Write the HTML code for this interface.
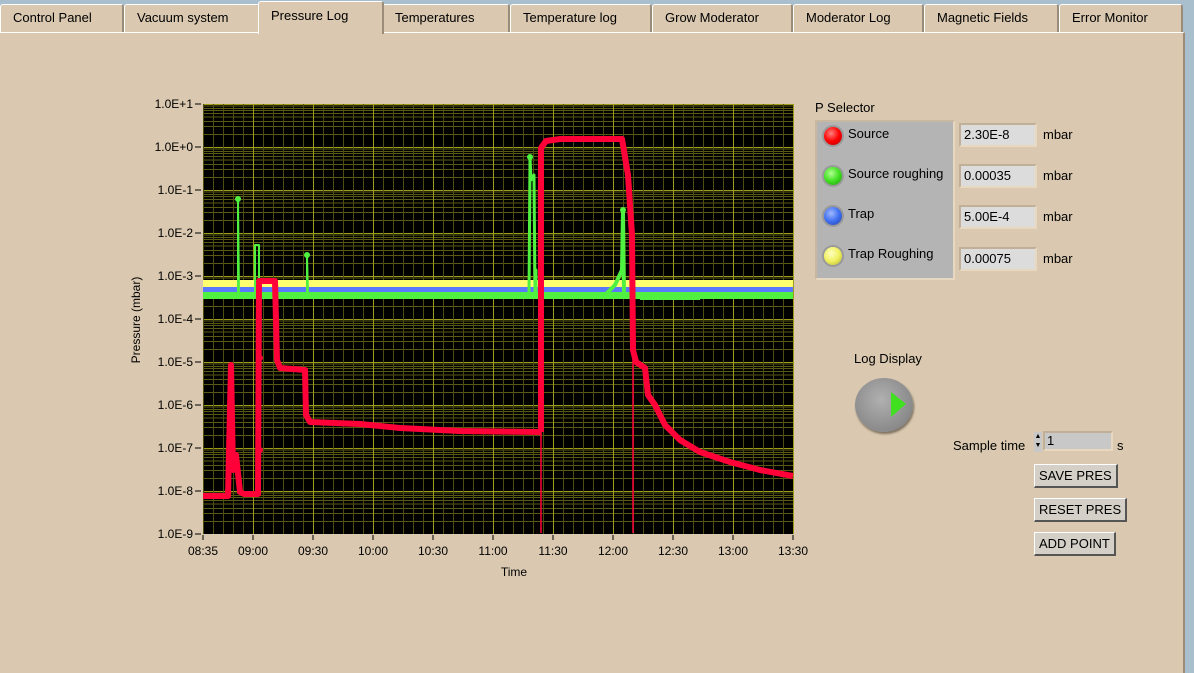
<!DOCTYPE html>
<html><head><meta charset="utf-8"><style>
body{margin:0;width:1194px;height:672px;overflow:hidden;background:#a9bfcd;font-family:"Liberation Sans",sans-serif;font-size:13px;color:#000}
.panel{position:absolute;left:0;top:32px;width:1183px;height:640px;background:#dac9b0;border-top:1px solid #fff;border-right:2px solid #9a8c78}
.tab{position:absolute;top:4px;height:28px;background:#dac9b0;border:1px solid #fff;border-right:2px solid #9a8c78;border-bottom:none;border-radius:3px 3px 0 0;box-sizing:border-box;padding:5px 0 0 12px;font-size:13px}
.tab.a{top:1px;height:33px;padding-top:6px;z-index:2}
.lbl{position:absolute;font-size:13px}
.box{position:absolute;background:#dcdcdc;border:2px solid #e8d8c0;border-top-color:#c0b098;border-left-color:#c0b098;height:18px;box-sizing:content-box;padding:1px 3px;font-size:13px;line-height:18px}
.btn{position:absolute;background:#d4d0c8;border:1px solid #fff;border-right:2px solid #555;border-bottom:2px solid #555;font-size:13px;padding:3px 4px;line-height:15px}
.led{position:absolute;width:18px;height:18px;border-radius:50%;box-shadow:0 0 0 2px #999}
</style></head><body>
<div class="tab" style="left:0;width:124px">Control Panel</div>
<div class="tab" style="left:124px;width:136px">Vacuum system</div>
<div class="tab a" style="left:258px;width:126px">Pressure Log</div>
<div class="tab" style="left:382px;width:128px">Temperatures</div>
<div class="tab" style="left:510px;width:142px">Temperature log</div>
<div class="tab" style="left:652px;width:141px">Grow Moderator</div>
<div class="tab" style="left:793px;width:131px">Moderator Log</div>
<div class="tab" style="left:924px;width:135px">Magnetic Fields</div>
<div class="tab" style="left:1059px;width:124px">Error Monitor</div>
<div class="panel"></div>

<svg style="position:absolute;left:0;top:0" width="1194" height="672" font-family="Liberation Sans,sans-serif" font-size="12">
<defs>
<pattern id="vmin" patternUnits="userSpaceOnUse" x="203" y="0" width="10" height="10"><line x1="0.5" y1="0" x2="0.5" y2="10" stroke="#4e4e10"/></pattern>
<pattern id="vmaj" patternUnits="userSpaceOnUse" x="253" y="0" width="60" height="10"><line x1="0.5" y1="0" x2="0.5" y2="10" stroke="#9c9c18"/></pattern>
<pattern id="hlog" patternUnits="userSpaceOnUse" x="0" y="104" width="10" height="43">
<g stroke="#5a5a12"><line x1="0" y1="30.5" x2="10" y2="30.5"/><line x1="0" y1="22.5" x2="10" y2="22.5"/><line x1="0" y1="17.5" x2="10" y2="17.5"/><line x1="0" y1="13" x2="10" y2="13"/><line x1="0" y1="9.5" x2="10" y2="9.5"/><line x1="0" y1="6.5" x2="10" y2="6.5"/><line x1="0" y1="4.5" x2="10" y2="4.5"/><line x1="0" y1="2" x2="10" y2="2"/></g>
<line x1="0" y1="0.5" x2="10" y2="0.5" stroke="#9c9c18"/></pattern>
</defs>
<rect x="203" y="104" width="590" height="430" fill="#000"/>
<rect x="203" y="104" width="590" height="430" fill="url(#hlog)"/>
<rect x="203" y="104" width="590" height="430" fill="url(#vmin)"/>
<rect x="203" y="104" width="591" height="430" fill="url(#vmaj)"/>
<g text-anchor="end">
<text x="193" y="108">1.0E+1</text><text x="193" y="151">1.0E+0</text><text x="193" y="194">1.0E-1</text><text x="193" y="237">1.0E-2</text><text x="193" y="280">1.0E-3</text><text x="193" y="323">1.0E-4</text><text x="193" y="366">1.0E-5</text><text x="193" y="409">1.0E-6</text><text x="193" y="452">1.0E-7</text><text x="193" y="495">1.0E-8</text><text x="193" y="538">1.0E-9</text>
</g>
<g stroke="#000">
<line x1="195" y1="104" x2="201" y2="104"/><line x1="195" y1="147" x2="201" y2="147"/><line x1="195" y1="190" x2="201" y2="190"/><line x1="195" y1="233" x2="201" y2="233"/><line x1="195" y1="276" x2="201" y2="276"/><line x1="195" y1="319" x2="201" y2="319"/><line x1="195" y1="362" x2="201" y2="362"/><line x1="195" y1="405" x2="201" y2="405"/><line x1="195" y1="448" x2="201" y2="448"/><line x1="195" y1="491" x2="201" y2="491"/><line x1="195" y1="534" x2="201" y2="534"/>
<line x1="203" y1="535" x2="203" y2="540"/><line x1="253" y1="535" x2="253" y2="540"/><line x1="313" y1="535" x2="313" y2="540"/><line x1="373" y1="535" x2="373" y2="540"/><line x1="433" y1="535" x2="433" y2="540"/><line x1="493" y1="535" x2="493" y2="540"/><line x1="553" y1="535" x2="553" y2="540"/><line x1="613" y1="535" x2="613" y2="540"/><line x1="673" y1="535" x2="673" y2="540"/><line x1="733" y1="535" x2="733" y2="540"/><line x1="793" y1="535" x2="793" y2="540"/>
</g>
<g text-anchor="middle">
<text x="203" y="555">08:35</text><text x="253" y="555">09:00</text><text x="313" y="555">09:30</text><text x="373" y="555">10:00</text><text x="433" y="555">10:30</text><text x="493" y="555">11:00</text><text x="553" y="555">11:30</text><text x="613" y="555">12:00</text><text x="673" y="555">12:30</text><text x="733" y="555">13:00</text><text x="793" y="555">13:30</text>
</g>
<rect x="203" y="280" width="590" height="7" fill="#ffff70"/><rect x="203" y="287" width="590" height="5" fill="#5a78ff"/><rect x="203" y="292" width="590" height="7" fill="#50f040"/>
<g fill="none" stroke-linejoin="round">
<polyline points="238,295 238,199 239,295" stroke="#50f040" stroke-width="2"/>
<polyline points="255,295 255,245 259,245 259,295" stroke="#50f040" stroke-width="2"/>
<polyline points="307,295 307,255 308,295" stroke="#50f040" stroke-width="2"/>
<polyline points="529,295 530,157 531,180 534,175 535,295 536,270 536,295" stroke="#50f040" stroke-width="3"/>
<polyline points="605,295 615,285 622,270 623,210 624,295 632,295" stroke="#50f040" stroke-width="4"/>
<polyline points="640,298 700,298" stroke="#50f040" stroke-width="4"/>
<polyline points="203,496 228,496 231,365 233,470 236,455 240,492 244,494 258,494 259,281 275,281 277,360 280,368 305,370 306,415 310,422 360,424 400,428 460,431 541,432" stroke="#ff0038" stroke-width="6"/>
<polyline points="541,432 541,148 546,141 560,139 622,139 628,175 632,235 633,350 636,362 645,368 648,395 655,405 665,425 680,440 700,452 730,462 760,470 793,476" stroke="#ff0038" stroke-width="6"/>
<polyline points="260,296 260,470" stroke="#ff0038" stroke-width="1.5"/>
<polyline points="541,160 541,533" stroke="#ff0038" stroke-width="1.5"/>
<polyline points="633,280 633,533" stroke="#ff0038" stroke-width="1.5"/>
</g>
<g fill="#ff0038"><circle cx="541" cy="245" r="3"/><circle cx="541" cy="358" r="3"/><circle cx="260" cy="358" r="3"/><circle cx="260" cy="450" r="3"/></g>
<g fill="#50f040"><circle cx="238" cy="199" r="3"/><circle cx="307" cy="255" r="3"/><circle cx="530" cy="157" r="3"/><circle cx="623" cy="210" r="3"/></g>
<text x="514" y="576" text-anchor="middle">Time</text>
<text transform="translate(140,320) rotate(-90)" text-anchor="middle">Pressure (mbar)</text>
</svg>

<div class="lbl" style="left:815px;top:100px">P Selector</div>
<div style="position:absolute;left:815px;top:120px;width:136px;height:156px;background:#b4b4b4;border:2px solid #e8d8c0;border-top-color:#c8b8a0;border-left-color:#c8b8a0"></div>
<div class="led" style="left:824px;top:127px;background:radial-gradient(circle at 40% 35%,#ff8080,#f00 50%,#a00)"></div>
<div class="led" style="left:824px;top:167px;background:radial-gradient(circle at 40% 35%,#b0ff90,#40e020 50%,#209010)"></div>
<div class="led" style="left:824px;top:207px;background:radial-gradient(circle at 40% 35%,#a0b8ff,#4070f0 50%,#2040a0)"></div>
<div class="led" style="left:824px;top:247px;background:radial-gradient(circle at 40% 35%,#ffffc0,#f0f060 50%,#b0b030)"></div>
<div class="lbl" style="left:848px;top:126px">Source</div>
<div class="lbl" style="left:848px;top:166px">Source roughing</div>
<div class="lbl" style="left:848px;top:206px">Trap</div>
<div class="lbl" style="left:848px;top:246px">Trap Roughing</div>
<div class="box" style="left:959px;top:123px;width:68px">2.30E-8</div>
<div class="box" style="left:959px;top:164px;width:68px">0.00035</div>
<div class="box" style="left:959px;top:205px;width:68px">5.00E-4</div>
<div class="box" style="left:959px;top:247px;width:68px">0.00075</div>
<div class="lbl" style="left:1043px;top:127px">mbar</div>
<div class="lbl" style="left:1043px;top:168px">mbar</div>
<div class="lbl" style="left:1043px;top:209px">mbar</div>
<div class="lbl" style="left:1043px;top:251px">mbar</div>

<div class="lbl" style="left:854px;top:351px">Log Display</div>
<div style="position:absolute;left:855px;top:378px;width:58px;height:54px;border-radius:50%;background:radial-gradient(circle at 45% 40%,#b0b0b0,#8a8a8a 70%,#606060);box-shadow:1px 2px 2px #7a6e5c"></div>
<svg style="position:absolute;left:890px;top:390px" width="24" height="30"><polygon points="1,2 16,14 1,27" fill="#40e020"/></svg>

<div class="lbl" style="left:953px;top:438px">Sample time</div>
<div style="position:absolute;left:1034px;top:432px;width:8px;height:20px;background:#c8c8c8;font-size:7px;line-height:9px;text-align:center">▲<br>▼</div>
<div class="box" style="left:1043px;top:431px;width:62px;height:16px;line-height:16px;background:#c8c8c8;padding:0 2px">1</div>
<div class="lbl" style="left:1117px;top:438px">s</div>
<div class="btn" style="left:1034px;top:464px">SAVE PRES</div>
<div class="btn" style="left:1034px;top:498px">RESET PRES</div>
<div class="btn" style="left:1034px;top:532px">ADD POINT</div>
</body></html>
